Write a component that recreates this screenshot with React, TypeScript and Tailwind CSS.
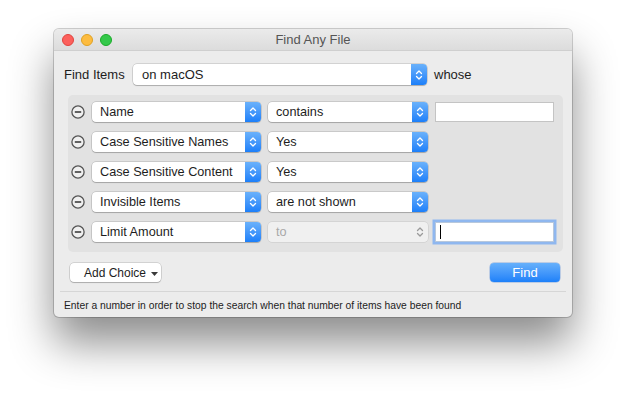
import type { ReactNode } from "react";

const font = { fontFamily: '"Liberation Sans", Arial, sans-serif' };

function Stepper({ disabled }: { disabled?: boolean }) {
  return (
    <span
      className={
        disabled
          ? "flex h-full w-[16px] items-center justify-center rounded-r-[4px]"
          : "flex h-full w-[16px] items-center justify-center rounded-r-[4px] bg-gradient-to-b from-[#69b1fb] to-[#1b7ff9]"
      }
    >
      <svg width="8" height="12" viewBox="0 0 8 12" fill="none">
        <path
          d="M1.5 4.5 L4 2 L6.5 4.5 M1.5 7.5 L4 10 L6.5 7.5"
          stroke={disabled ? "#9a9a9a" : "#ffffff"}
          strokeWidth="1.3"
          strokeLinecap="round"
          strokeLinejoin="round"
        />
      </svg>
    </span>
  );
}

function Popup({
  label,
  width,
  disabled
}: {
  label: string;
  width: string;
  disabled?: boolean;
}) {
  return (
    <div
      className={`flex h-[20px] ${width} items-center justify-between rounded-[4px] ${
        disabled
          ? "bg-[#f0f0f0] text-[#a8a8a8] shadow-[0_0_0_0.5px_rgba(0,0,0,0.12)]"
          : "bg-white text-[#1d1d1d] shadow-[0_0_0_0.5px_rgba(0,0,0,0.22),0_1px_1px_rgba(0,0,0,0.18)]"
      }`}
    >
      <span className="whitespace-nowrap pl-[8px] text-[12.7px] leading-none">{label}</span>
      <Stepper disabled={disabled} />
    </div>
  );
}

function Minus() {
  return (
    <svg width="14" height="14" viewBox="0 0 14 14" className="shrink-0">
      <circle cx="7" cy="7" r="6.1" fill="#f0f0f0" stroke="#555555" strokeWidth="1.3" />
      <line x1="3.8" y1="7" x2="10.2" y2="7" stroke="#333333" strokeWidth="1.6" />
    </svg>
  );
}

function Row({ children }: { children: ReactNode }) {
  return <div className="flex h-[20px] items-center gap-[7px]">{children}</div>;
}

export default function App() {
  return (
    <div className="h-[393px] w-[628px] overflow-hidden bg-white pl-[54px] pt-[29px]" style={font}>
      <div className="flex h-[288px] w-[518px] flex-col overflow-hidden rounded-[5px] bg-[#ececec] shadow-[0_0_0_1px_rgba(0,0,0,0.18),0_26px_44px_rgba(0,0,0,0.45)]">
        <div className="relative flex h-[22px] shrink-0 items-center justify-center border-b border-[#cfcfcf] bg-gradient-to-b from-[#ebebeb] to-[#dcdcdc]">
          <div className="absolute left-[8px] top-[5px] flex gap-[7px]">
            <span className="h-[12px] w-[12px] rounded-full border border-[#e0443e] bg-[#fc605c]" />
            <span className="h-[12px] w-[12px] rounded-full border border-[#dea123] bg-[#fdbc40]" />
            <span className="h-[12px] w-[12px] rounded-full border border-[#1aab29] bg-[#34c84a]" />
          </div>
          <span className="text-[13px] text-[#555555]">Find Any File</span>
        </div>

        <div className="mt-[13px] flex h-[21px] items-center pl-[10px]">
          <span className="w-[69px] whitespace-nowrap text-[13px] text-[#1d1d1d]">Find Items</span>
          <div className="flex h-[21px] w-[294px] items-center justify-between rounded-[4px] bg-white shadow-[0_0_0_0.5px_rgba(0,0,0,0.22),0_1px_1px_rgba(0,0,0,0.18)]">
            <span className="pl-[9px] text-[13px] text-[#1d1d1d]">on macOS</span>
            <Stepper />
          </div>
          <span className="ml-[7px] text-[13px] text-[#1d1d1d]">whose</span>
        </div>

        <div className="ml-[14px] mt-[10px] flex h-[157px] w-[495px] flex-col gap-[10px] rounded-[5px] bg-[#e2e2e2] pl-[3px] pt-[7px]">
          <Row>
            <Minus />
            <Popup label="Name" width="w-[169px]" />
            <Popup label="contains" width="w-[160px]" />
            <div className="h-[20px] w-[119px] border border-[#c4c4c4] bg-white" />
          </Row>
          <Row>
            <Minus />
            <Popup label="Case Sensitive Names" width="w-[169px]" />
            <Popup label="Yes" width="w-[160px]" />
          </Row>
          <Row>
            <Minus />
            <Popup label="Case Sensitive Content" width="w-[169px]" />
            <Popup label="Yes" width="w-[160px]" />
          </Row>
          <Row>
            <Minus />
            <Popup label="Invisible Items" width="w-[169px]" />
            <Popup label="are not shown" width="w-[160px]" />
          </Row>
          <Row>
            <Minus />
            <Popup label="Limit Amount" width="w-[169px]" />
            <Popup label="to" width="w-[160px]" disabled />
            <div className="flex h-[20px] w-[119px] items-center border border-[#b8c8dc] bg-white pl-[4px] shadow-[0_0_0_2.5px_#8fb7ef]">
              <span className="h-[14px] w-[1px] bg-black" />
            </div>
          </Row>
        </div>

        <div className="mt-[11px] flex items-center justify-between pl-[16px] pr-[12px]">
          <div className="flex h-[19px] w-[91px] shrink-0 items-center rounded-[4px] bg-white pl-[14px] shadow-[0_0_0_0.5px_rgba(0,0,0,0.22),0_1px_1px_rgba(0,0,0,0.18)]">
            <span className="whitespace-nowrap text-[12px] text-[#1d1d1d]">Add Choice</span>
            <svg width="7" height="5" viewBox="0 0 7 5" className="ml-[5px] mt-[4px] shrink-0">
              <path d="M0 0 L7 0 L3.5 4 Z" fill="#3a3a3a" />
            </svg>
          </div>
          <div className="flex h-[19px] w-[70px] items-center justify-center rounded-[4px] bg-gradient-to-b from-[#66b0fb] to-[#1c80f9] shadow-[0_0_0_0.5px_rgba(0,80,200,0.4)]">
            <span className="text-[13px] text-white">Find</span>
          </div>
        </div>

        <div className="mx-[6px] mt-[9px] h-px bg-[#d6d6d6]" />

        <div className="whitespace-nowrap pl-[10px] pt-[6px] text-[10.3px] text-[#1d1d1d]">
          Enter a number in order to stop the search when that number of items have been found
        </div>
      </div>
    </div>
  );
}
